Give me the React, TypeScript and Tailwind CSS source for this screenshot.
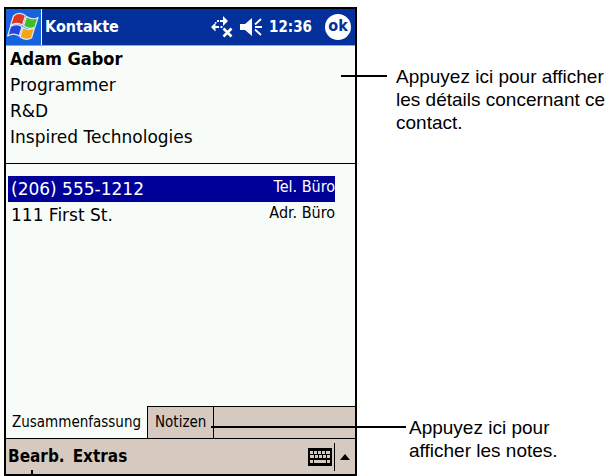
import type { ReactNode } from 'react';

interface ContactEntry {
  value: string;
  label: string;
  selected?: boolean;
}

const details = ['Programmer', 'R&D', 'Inspired Technologies'];

const entries: ContactEntry[] = [
  { value: '(206) 555-1212', label: 'Tel. Büro', selected: true },
  { value: '111 First St.', label: 'Adr. Büro' },
];

function StartFlag() {
  return (
    <svg viewBox="0 0 35 36" className="h-9 w-[35px]" aria-hidden="true">
      <g stroke="#dfe9fb" strokeWidth="1.2" strokeLinejoin="round">
        <path d="M7.500 7c3.500-3.500 8-3 12-.5L16.500 16c-4-2.500-8-2-12 .5z" fill="#e0381f" />
        <path d="M20.500 7.500c3.500 2.500 7.500 3 11.500 1l-3 9.500c-4 2-8 1.500-11.500-1z" fill="#3fbe28" />
        <path d="M4.500 17.500c4-2.500 8-2.500 11.500 0L13.200 27c-4-2.500-7.500-2.500-11.500 0z" fill="#2346dc" />
        <path d="M17 18.500c3.500 2.500 7.500 2.500 11.500.5l-3 10c-4 2-8 1.500-11.500-1z" fill="#f5a614" />
      </g>
    </svg>
  );
}

function ConnectionIcon() {
  return (
    <svg viewBox="0 0 22 22" className="size-[22px]" fill="#fff" aria-hidden="true">
      <path d="M0 11l4.500-4.500V10H8v2H4.500v3.500zM17 5l-5-5v4H9v2h3v4zM6 4h2v2H6zM4 6h1.500v1.500H4zM9.500 10h2v2h-2z" />
      <path d="M12.500 12.500l8 8M20.500 12.500l-8 8" stroke="#fff" strokeWidth="2.600" />
    </svg>
  );
}

function SpeakerIcon() {
  return (
    <svg viewBox="0 0 22 18" className="h-[18px] w-[22px]" aria-hidden="true">
      <path d="M0 6h5l7-6v18l-7-6H0z" fill="#fff" />
      <path d="M15 6.500l6-5.500M15 9h7M15 11.500l6 5.500" stroke="#fff" strokeWidth="1.800" />
    </svg>
  );
}

function KeyboardIcon() {
  return (
    <svg viewBox="0 0 24 18" className="h-[18px] w-6" shapeRendering="crispEdges" aria-hidden="true">
      <path d="M0 0h24v18H0z" fill="#000" />
      <path
        d="M2 3h3v3H2zM6 3h3v3H6zM10 3h3v3h-3zM14 3h3v3h-3zM18 3h4v3h-4zM2 7h4v3H2zM7 7h3v3H7zM11 7h3v3h-3zM15 7h3v3h-3zM19 7h3v3h-3zM2 12h3v3H2zM6 12h12v3H6zM19 12h3v3h-3z"
        fill="#d6cac0"
      />
    </svg>
  );
}

function TitleBar() {
  return (
    <header className="flex h-[37px] items-center border-b border-[#8fa6dc] bg-[#03309a] text-base font-bold text-white">
      <button type="button" aria-label="Start" className="h-full shrink-0 border-r border-white bg-[#1763df]">
        <StartFlag />
      </button>
      <h1 className="flex-1 pl-[3px]">Kontakte</h1>
      <div className="flex items-center gap-[7px] pr-1">
        <ConnectionIcon />
        <SpeakerIcon />
        <time className="text-[15px]">12:36</time>
        <button type="button" className="ml-1.5 flex size-[26px] items-center justify-center rounded-full bg-white pb-0.5 text-[#03309a]">
          ok
        </button>
      </div>
    </header>
  );
}

function TabBar() {
  return (
    <nav className="flex h-[33px] text-[15px]">
      <button type="button" className="border-b border-black px-1.5">
        Zusammenfassung
      </button>
      <button type="button" className="border border-black bg-[#d6cac0] px-[7px]">
        Notizen
      </button>
      <div className="flex-1 border-y border-black bg-[#d6cac0]" />
    </nav>
  );
}

function CommandBar() {
  return (
    <footer className="relative flex h-[35px] items-center bg-[#d6cac0] text-[17px] font-bold">
      <button type="button" className="pl-0.5">Bearb.</button>
      <button type="button" className="flex-1 pl-2 text-left">Extras</button>
      <button type="button" aria-label="Tastatur" className="pr-0.5">
        <KeyboardIcon />
      </button>
      <button type="button" aria-label="Eingabe wählen" className="flex h-7 items-center border-l border-black px-[5px]">
        <svg viewBox="0 0 10 6" className="h-1.5 w-2.5" aria-hidden="true">
          <path d="M5 0l5 6H0z" />
        </svg>
      </button>
      <span className="absolute bottom-0 left-[25px] h-1 w-0.5 bg-black" />
    </footer>
  );
}

function Callout({ line, children }: { line: string; children: ReactNode }) {
  return (
    <p className="relative whitespace-nowrap">
      <span className={`absolute top-2.5 h-0.5 bg-black ${line}`} />
      {children}
    </p>
  );
}

export default function App() {
  return (
    <div className="flex min-h-screen overflow-x-hidden bg-white pl-1 text-black">
      <main className="mt-[7px] flex min-w-0 flex-1 flex-col border-2 border-black bg-[#f8fcf9] font-['DejaVu_Sans_Condensed','DejaVu_Sans',sans-serif]">
        <TitleBar />
        <section className="border-b border-black pb-[13px] pl-1 leading-[26px]">
          <h2 className="text-lg leading-[26px] font-bold">Adam Gabor</h2>
          {details.map((text) => (
            <p key={text} className="font-['DejaVu_Sans',sans-serif] text-[17px]">
              {text}
            </p>
          ))}
        </section>
        <ul className="flex-1 pt-3 pr-5 pl-0.5">
          {entries.map((entry) => (
            <li
              key={entry.label}
              className={`flex h-[26px] justify-between pl-[3px] ${entry.selected ? 'bg-[#000098] text-white' : ''}`}
            >
              <span className="font-['DejaVu_Sans',sans-serif] text-[17px] leading-[26px]">{entry.value}</span>
              <span className="text-base leading-[22px]">{entry.label}</span>
            </li>
          ))}
        </ul>
        <TabBar />
        <CommandBar />
      </main>

      <aside className="flex w-[252px] shrink-0 flex-col justify-between pt-[65px] pb-3.5 font-['Liberation_Sans',Arial,sans-serif] text-[19px] leading-[23px]">
        <div className="pl-[39px]">
          <Callout line="-left-[55px] w-[46px]">
            Appuyez ici pour afficher
            <br />
            les détails concernant ce
            <br />
            contact.
          </Callout>
        </div>
        <div className="pl-[52px]">
          <Callout line="-left-[198px] w-[195px]">
            Appuyez ici pour
            <br />
            afficher les notes.
          </Callout>
        </div>
      </aside>
    </div>
  );
}
